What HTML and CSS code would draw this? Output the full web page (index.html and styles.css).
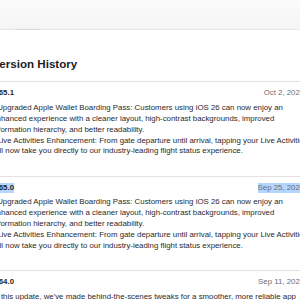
FILE: index.html
```html
<!DOCTYPE html>
<html>
<head>
<meta charset="utf-8">
<link rel="stylesheet" href="styles.css">
</head>
<body>
<header class="topbar"><span class="tab-mark"></span></header>
<main class="history">
  <h2 class="title">Version History</h2>
  <section class="entry">
    <div class="entry-head"><span class="ver">5.65.1</span><time class="date">Oct 2, 2025</time></div>
    <p class="notes">• Upgraded Apple Wallet Boarding Pass: Customers using iOS 26 can now enjoy an<br>enhanced experience with a cleaner layout, high-contrast backgrounds, improved<br>information hierarchy, and better readability.<br>• Live Activities Enhancement: From gate departure until arrival, tapping your Live Activities<br>will now take you directly to our industry-leading flight status experience.</p>
  </section>
  <section class="entry">
    <div class="entry-head"><span class="ver sel">5.65.0</span><time class="date sel">Sep 25, 2025</time></div>
    <p class="notes">• Upgraded Apple Wallet Boarding Pass: Customers using iOS 26 can now enjoy an<br>enhanced experience with a cleaner layout, high-contrast backgrounds, improved<br>information hierarchy, and better readability.<br>• Live Activities Enhancement: From gate departure until arrival, tapping your Live Activities<br>will now take you directly to our industry-leading flight status experience.</p>
  </section>
  <section class="entry">
    <div class="entry-head"><span class="ver">5.64.0</span><time class="date">Sep 11, 2025</time></div>
    <p class="notes">In this update, we've made behind-the-scenes tweaks for a smoother, more reliable app<br>experience.</p>
  </section>
</main>
</body>
</html>
```

FILE: styles.css
```css
html, body {
  margin: 0;
  padding: 0;
  background: #ffffff;
  overflow: hidden;
}
body {
  font-family: "Liberation Sans", Arial, sans-serif;
  color: #1d1d1f;
  width: 300px;
  height: 300px;
}
.topbar {
  height: 29px;
  background: linear-gradient(#fbfbfb, #f5f5f5);
  border-bottom: 1px solid #e6e6e6;
  position: relative;
}
.tab-mark {
  position: absolute;
  left: 15px;
  bottom: -1px;
  width: 25px;
  height: 1px;
  background: #d8d8d8;
}
.history {
  margin-left: -7.8px;
  width: 312px;
}
.title {
  margin: 0;
  padding-top: 27px;
  font-size: 11.6px;
  line-height: 14px;
  font-weight: 700;
  padding-bottom: 10px;
  border-bottom: 1px solid #e2e2e2;
}
.entry {
  padding: 6px 0 18.3px;
  border-bottom: 1px solid #e2e2e2;
}
.entry-head {
  display: flex;
  justify-content: space-between;
  align-items: center;
  height: 10px;
  font-size: 7.85px;
  line-height: 10px;
}
.ver {
  font-weight: 700;
  color: #1d1d1f;
}
.date {
  color: #6e6e73;
}
.sel {
  background: #b4d5fe;
}
.notes {
  margin: 4.8px 0 0;
  font-size: 7.85px;
  line-height: 10.9px;
  white-space: nowrap;
  color: #2a2a2c;
}
```
